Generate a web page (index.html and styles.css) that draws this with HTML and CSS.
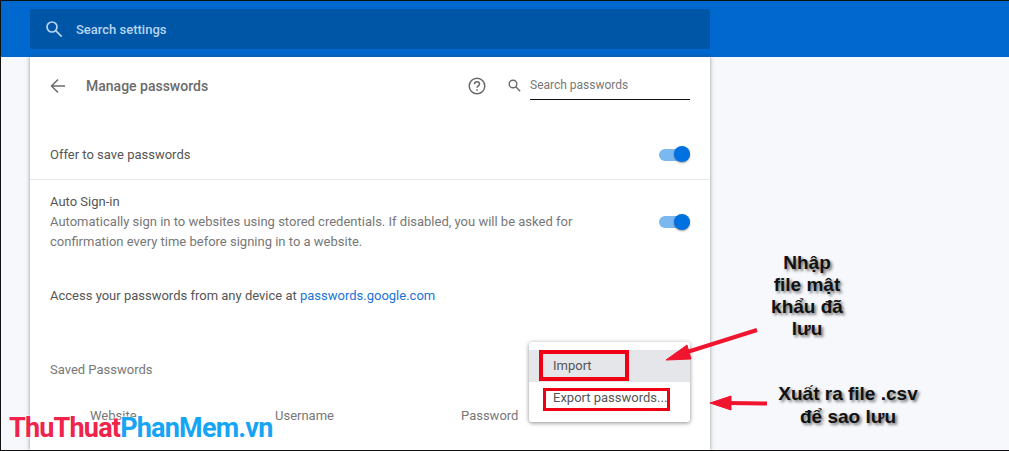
FILE: index.html
```html
<!DOCTYPE html>
<html lang="en">

<head>
    <meta charset="UTF-8">
    <title>Manage passwords</title>
    <link rel="stylesheet" href="styles.css">
</head>

<body>
    <div class="frame">
        <header class="topbar">
            <div class="search-settings">
                <svg class="search-icon" width="18" height="18" viewBox="0 0 18 18" fill="none" stroke="#b9d4f0" stroke-width="1.7">
                    <circle cx="7" cy="7" r="5"></circle>
                    <path d="M10.7 10.7l6 6"></path>
                </svg>
                <span>Search settings</span>
            </div>
        </header>

        <main class="card">
            <div class="title-row">
                <svg class="back-icon" width="16" height="16" viewBox="0 0 16 16" fill="none" stroke="#6a6a6a" stroke-width="1.5">
                    <path d="M15 8H2M8 1.5L1.5 8 8 14.5"></path>
                </svg>
                <h1>Manage passwords</h1>
                <svg class="help-icon" width="18" height="18" viewBox="0 0 18 18" fill="none" stroke="#6a6a6a" stroke-width="1.5">
                    <circle cx="9" cy="9" r="7.8"></circle>
                    <path d="M6.5 7.2c0-1.5 1.1-2.5 2.5-2.5s2.5 1 2.5 2.3c0 1.8-2.5 1.9-2.5 3.8"></path>
                    <path d="M9 12.2v1.6"></path>
                </svg>
                <svg class="small-search" width="13" height="13" viewBox="0 0 13 13" fill="none" stroke="#6a6a6a" stroke-width="1.4">
                    <circle cx="5" cy="5" r="3.8"></circle>
                    <path d="M7.8 7.8l4.4 4.4"></path>
                </svg>
                <div class="search-passwords">Search passwords</div>
            </div>

            <div class="row row-offer">
                <span>Offer to save passwords</span>
                <div class="toggle"><div class="knob"></div></div>
            </div>

            <div class="row row-signin">
                <div class="signin-text">
                    <div>Auto Sign-in</div>
                    <div class="muted">Automatically sign in to websites using stored credentials. If disabled, you will be asked for<br>confirmation every time before signing in to a website.</div>
                </div>
                <div class="toggle"><div class="knob"></div></div>
            </div>

            <p class="access">Access your passwords from any device at <a href="#">passwords.google.com</a></p>

            <h2>Saved Passwords</h2>

            <div class="columns">
                <span class="col-site">Website</span>
                <span class="col-user">Username</span>
                <span>Password</span>
            </div>

            <div class="menu">
                <div class="menu-item active"><span class="nudge">Import</span></div>
                <div class="menu-item"><span class="nudge">Export passwords...</span></div>
            </div>
        </main>

        <div class="mark mark-import"></div>
        <div class="mark mark-export"></div>

        <svg class="arrows" width="1009" height="451" viewBox="0 0 1009 451">
            <path d="M757 330L684 353" stroke="#f0142f" stroke-width="4"></path>
            <path d="M666 360L687 345 691 359z" fill="#f0142f" stroke="#f0142f"></path>
            <path d="M767 403.500L728 403" stroke="#f0142f" stroke-width="4"></path>
            <path d="M710 403L731 396V410z" fill="#f0142f" stroke="#f0142f"></path>
        </svg>

        <div class="note note-import">Nhập<br>file mật<br>khẩu đã<br>lưu</div>
        <div class="note note-export">Xuất ra file .csv<br>để sao lưu</div>

        <div class="brand"><span class="brand-red">ThuThuat</span><span class="brand-blue">PhanMem.vn</span></div>
    </div>
</body>

</html>
```

FILE: styles.css
```css
html,
body {
    margin: 0;
    padding: 0;
    height: 100%;
    overflow: hidden;
}

body {
    font-family: Roboto, 'Liberation Sans', sans-serif;
    font-size: 13px;
    color: #5f6368;
}

.frame {
    position: relative;
    box-sizing: border-box;
    width: 1009px;
    height: 451px;
    border-top: 1px solid #111;
    border-left: 1px solid #111;
    border-bottom: 1px solid #111;
    background-color: #f6f8fb;
    overflow: hidden;
}

.topbar {
    box-sizing: border-box;
    height: 56px;
    padding: 8px 0 0 29px;
    background-color: #0068cf;
}

.search-settings {
    display: flex;
    align-items: center;
    box-sizing: border-box;
    width: 680px;
    height: 40px;
    padding-left: 15px;
    border-radius: 2px;
    background-color: #0056a6;
    color: #b9d4f0;
    font-size: 13px;
    font-weight: 500;
}

.search-icon {
    margin-right: 13px;
}

.card {
    position: relative;
    box-sizing: border-box;
    width: 680px;
    height: 393px;
    margin-left: 29px;
    padding: 0 20px;
    background-color: #fff;
    box-shadow: 0 0 4px rgba(60, 64, 67, 0.55);
}

.title-row {
    display: flex;
    align-items: center;
    height: 57px;
}

.back-icon {
    margin-right: 20px;
}

h1 {
    flex: 1;
    margin: 0;
    font-size: 14px;
    font-weight: 500;
    color: #6b6b6b;
}

.help-icon {
    margin-right: 22px;
}

.small-search {
    margin-right: 9px;
}

.search-passwords {
    box-sizing: border-box;
    width: 160px;
    height: 28px;
    padding-top: 6px;
    border-bottom: 1px solid #111;
    font-size: 12px;
    color: #777;
}

.row {
    display: flex;
    align-items: center;
    justify-content: space-between;
    margin: 0 -20px;
    padding: 0 20px;
}

.row-offer {
    height: 66px;
    padding-top: 16px;
    box-sizing: border-box;
    border-bottom: 1px solid #e8e8e8;
    color: #555;
}

.row-signin {
    height: 84px;
    line-height: 20px;
    color: #555;
}

.muted {
    color: #777;
}

.toggle {
    position: relative;
    width: 31px;
    height: 12px;
    border-radius: 6px;
    background-color: #7cb8f0;
}

.knob {
    position: absolute;
    top: -2.500px;
    right: 0;
    width: 16px;
    height: 16px;
    border-radius: 50%;
    background-color: #0071e0;
    box-shadow: 0 1px 2px rgba(0, 0, 0, 0.4);
}

.access {
    margin: 24px 0 0;
    color: #555;
}

.access a {
    color: #1a73d9;
    text-decoration: none;
}

h2 {
    margin: 59px 0 0;
    font-size: 13px;
    font-weight: 400;
    color: #777;
}

.columns {
    display: flex;
    margin-top: 31px;
    padding-left: 40px;
    color: #777;
}

.col-site {
    width: 185px;
}

.col-user {
    width: 186px;
}

.menu {
    position: absolute;
    top: 285px;
    left: 499px;
    width: 161px;
    height: 80px;
    padding-top: 8px;
    box-sizing: border-box;
    border-radius: 3px;
    background-color: #fff;
    box-shadow: 0 1px 4px rgba(60, 64, 67, 0.6);
}

.menu-item {
    display: flex;
    align-items: center;
    height: 32px;
    padding-left: 24px;
    color: #555;
}

.menu-item.active {
    background-color: #e4e6ea;
}

.nudge {
    margin-bottom: 2px;
}

.mark {
    position: absolute;
    box-sizing: border-box;
    border: 3px solid #f00014;
}

.mark-import {
    top: 349px;
    left: 538px;
    width: 90px;
    height: 31px;
    border-width: 4px;
}

.mark-export {
    top: 387px;
    left: 542px;
    width: 127px;
    height: 23px;
}

.arrows {
    position: absolute;
    top: -1px;
    left: -1px;
}

.note {
    position: absolute;
    color: #111;
    font-family: 'Liberation Sans', sans-serif;
    font-size: 19px;
    font-weight: 700;
    line-height: 22px;
    text-align: center;
    text-shadow: 2px 2px 3px rgba(0, 0, 0, 0.55);
}

.note-import {
    top: 251px;
    left: 746px;
    width: 120px;
}

.note-export {
    top: 381px;
    left: 757px;
    width: 180px;
    line-height: 23px;
}

.brand {
    position: absolute;
    top: 411px;
    left: 8px;
    font-family: Roboto, 'Liberation Sans', sans-serif;
    font-size: 27px;
    font-weight: 700;
    letter-spacing: -0.8px;
    line-height: 32px;
    text-shadow: 0 0 2px #fff, 0 0 2px #fff;
}

.brand-red {
    color: #f0234b;
}

.brand-blue {
    color: #16a5f5;
}
```
